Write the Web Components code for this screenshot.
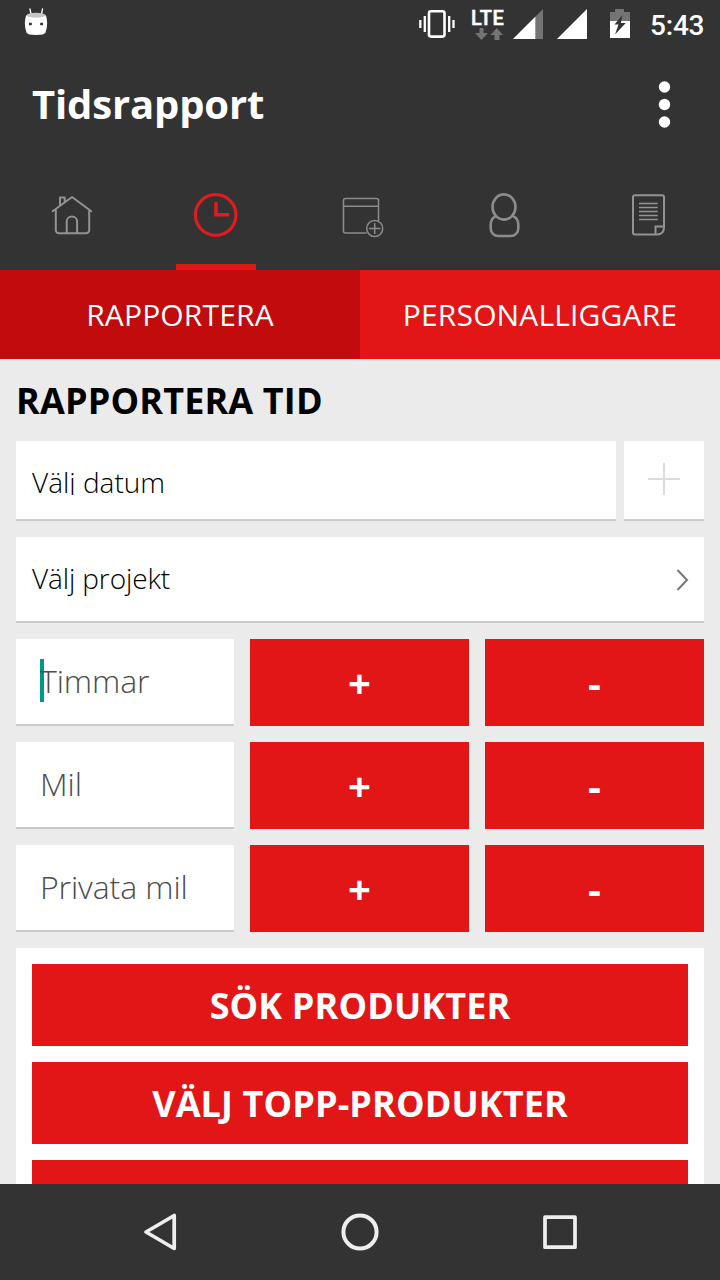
<!DOCTYPE html>
<html lang="sv">
<head>
<meta charset="utf-8">
<meta name="viewport" content="width=device-width, initial-scale=1">
<title>Tidsrapport</title>
<style>
  html, body{margin:0; height:100%; overflow:hidden}
  body{
    --dark:#333;
    --red:#e21517;
    --red-active:#c10b0c;
    --page:#ebebeb;
    --line:#cacaca;
    font-family:"Open Sans", "Noto Sans", sans-serif;
    background:var(--page);
  }
</style>
</head>
<body>
<time-report-app></time-report-app>

<script>
const define = (name, html, setup) => {
  const template = document.createElement('template');
  template.innerHTML = `<style>*, *::before, *::after{box-sizing:border-box} svg{display:block; flex:none}</style>${html}`;
  customElements.define(name, class extends HTMLElement {
    constructor() {
      super();
      this.attachShadow({ mode: 'open' }).appendChild(template.content.cloneNode(true));
    }

    connectedCallback() {
      setup?.(this, this.shadowRoot);
    }
  });
};

const TAB_ICONS = {
  home: `<g stroke="#929292" stroke-width="2" stroke-linecap="round" stroke-linejoin="round">
    <path d="M4.7 20.2 24 6l19.3 14.2M12 14V6.5h4.7v4M7.8 19v20.2a3 3 0 0 0 3 3h27.4a3 3 0 0 0 3-3V19"/>
    <path d="M18.7 42V30.5a5.2 5 0 0 1 10.4 0V42"/></g>`,
  clock: `<g stroke="#de1c22"><circle cx="23.7" cy="24" r="20.3" stroke-width="3.2"/><path d="M24 11v12.7h13" stroke-width="3.6"/></g>`,
  calendar: `<g stroke="#8c8c8c" stroke-width="1.5"><path d="M30.5 42H9.5a2 2 0 0 1-2-2V9.5a2 2 0 0 1 2-2h31a2 2 0 0 1 2 2V30M7.5 15.3h35"/>
    <circle cx="38.7" cy="37.5" r="8"/><path d="M33 37.5h11.4M38.7 32v11"/></g>`,
  person: `<g stroke="#8c8c8c" stroke-width="2.6"><ellipse cx="24" cy="16" rx="11.5" ry="12.6"/>
    <path d="M16 25.3c-3.5 1.2-5.3 4.5-5.3 8.5v3.7a7.5 7.5 0 0 0 7.5 7.5h12.6a7.5 7.5 0 0 0 7.5-7.5v-3.7c0-4-1.8-7.3-5.3-8.5"/></g>`,
  document: `<g stroke="#939393" stroke-width="2"><path d="M33 43.5H11a2 2 0 0 1-2-2V6.2a2 2 0 0 1 2-2h27a2 2 0 0 1 2 2V36c0 4.5-2.5 7.5-7 7.5zM31.5 43v-7.5h8"/>
    <path d="M15 12.5h18.7M15 16.5h18.7M15 20.5h18.7M15 24.5h18.7M15 28.5h18.7" stroke-width="1.3"/></g>`,
};

define('status-bar', `
  <style>
    :host{display:flex; height:48px; padding:0 16px 0 24px; color:#fff; background:var(--dark)}
    .left{flex:1}
    .lte{display:flex; flex-direction:column; width:34px; margin:8px 8px 0 15px; font:500 20px/20px Roboto, sans-serif; -webkit-text-stroke:.5px #fff}
    .lte span{white-space:nowrap; letter-spacing:.5px}
    .lte svg{margin-left:4px}
    .sim{margin-right:14px}
    .battery{margin:0 20px 0 9px}
    .time{width:54px; font:500 28px/51px Roboto, sans-serif; letter-spacing:-.2px; white-space:nowrap}
  </style>
  <div class="left">
    <svg width="24" height="48" viewBox="0 0 24 48">
      <path d="M6 9l1 5M18.5 9l-1 5" stroke="#fff" stroke-width="1.3" stroke-linecap="round"/>
      <path d="M2 15.5Q12 11 22 15.5Q24.5 24 21.5 32.5Q20.5 35 12 35T2.5 32.5Q-.5 24 2 15.5z" fill="#fff"/>
      <ellipse cx="12" cy="15.2" rx="9.3" ry="2.5" fill="#c6c6c6"/>
      <path d="M5 22.7h2.8v2.6H5zM16.2 22.7H19v2.6h-2.8z" fill="#333"/>
    </svg>
  </div>
  <svg width="37" height="48" viewBox="0 0 37 48" fill="none" stroke="#fff">
    <rect x="10" y="11.3" width="15.5" height="25.3" rx="2" stroke-width="2.6"/>
    <path d="M1.3 20v8M34.5 20v8" stroke-width="2.3"/>
    <path d="M5.8 16v16M30.2 16v16" stroke-width="2.3"/>
  </svg>
  <div class="lte"><span>LTE</span>
    <svg width="29" height="12" viewBox="0 0 29 12" fill="#747474"><path d="M4.5 0h4v5H13L6.5 12 0 5h4.5zM19.5 12h5V7H28L21.8 0 15.5 7h4z"/></svg>
  </div>
  <svg class="sim" width="30" height="48" viewBox="0 0 30 48"><path d="M0 39 30 9v30z" fill="#747474"/><path d="M0 39 22.3 16.7V39z" fill="#fff"/></svg>
  <svg class="sim" width="30" height="48" viewBox="0 0 30 48"><path d="M0 39 30 9v30z" fill="#fff"/></svg>
  <svg class="battery" width="20" height="48" viewBox="0 0 20 48">
    <path d="M5 9h9v3h6v10H0V12h5z" fill="#747474"/><path d="M0 21h20v17H0z" fill="#fff"/>
    <path d="M12.5 15 4.5 24.5h4L5 34.5 15.8 23h-5z" fill="#333"/>
  </svg>
  <div class="time">5:43</div>
`);

define('app-toolbar', `
  <style>
    :host{display:flex; align-items:center; justify-content:space-between; height:112px; padding:0 48px 0 32px; color:#fff; background:var(--dark)}
    h1{margin:0 0 1px; font-size:40px; line-height:56px; font-weight:700; letter-spacing:-.15px}
  </style>
  <h1><slot></slot></h1>
  <svg width="15" height="52" viewBox="0 0 15 52" fill="#fff" role="img" aria-label="Meny">
    <circle cx="7.5" cy="9" r="5.7"/><circle cx="7.5" cy="26.5" r="5.7"/><circle cx="7.5" cy="44" r="5.7"/>
  </svg>
`);

define('nav-tab', `
  <style>
    :host{display:flex; flex-direction:column; align-items:center; justify-content:space-between; flex:1; padding-top:31px}
    .bar{width:80px; height:6px}
    :host([active]) .bar{background:var(--red)}
  </style>
  <svg width="48" height="48" viewBox="0 0 48 48" fill="none"></svg>
  <div class="bar"></div>
`, (el, root) => {
  root.querySelector('svg').innerHTML = TAB_ICONS[el.getAttribute('icon')];
});

define('segment-button', `
  <style>
    :host{display:block; flex:1; text-align:center; font-size:30px; line-height:89px; letter-spacing:.15px; color:#fff; background:var(--red)}
    :host([active]){background:var(--red-active)}
  </style>
  <slot></slot>
`);

define('select-field', `
  <style>
    :host{display:flex; align-items:center; justify-content:space-between; height:86px; padding:0 15px 0 16px; font-size:28px; font-weight:300; color:#000; background:#fff; border-bottom:2px solid var(--line)}
    span{margin-bottom:2px; line-height:38px; letter-spacing:-.12px; white-space:nowrap}
    /* the date label is cut just below its baseline */
    :host([compact]){flex:1; height:80px; align-items:flex-start; padding-top:22px}
    :host([compact]) span{height:32px; overflow:hidden; letter-spacing:0}
    :host([compact]) svg{display:none}
  </style>
  <span><slot></slot></span>
  <svg width="13" height="24" viewBox="0 0 13 24" fill="none" stroke="#777" stroke-width="2"><path d="M1.5 3l9.5 10-9.5 10"/></svg>
`);

define('add-button', `
  <style>
    :host{display:flex; justify-content:center; width:80px; height:80px; padding-top:22px; background:#fff; border-bottom:2px solid var(--line)}
  </style>
  <svg width="32" height="32" viewBox="0 0 32 32" stroke="#dcdcdc" stroke-width="2"><path d="M0 16h32M16 0v32"/></svg>
`);

define('stepper-row', `
  <style>
    :host{display:grid; grid-template-columns:218px 1fr 1fr; gap:16px; height:87px}
    .field{position:relative; padding-left:24px; font-size:32px; line-height:84px; font-weight:300; letter-spacing:-.1px; color:#4c4c4c; background:#fff; border-bottom:2px solid var(--line)}
    .field span{position:relative; white-space:nowrap}
    :host([focused]) .field::before{content:""; position:absolute; left:24px; top:20px; width:4px; height:43px; background:#009688}
    .step{text-align:center; font-size:40px; line-height:87px; font-weight:700; color:#fff; background:var(--red)}
  </style>
  <div class="field"><span><slot></slot></span></div>
  <div class="step">+</div>
  <div class="step">-</div>
`);

define('action-button', `
  <style>
    :host{display:block; flex:none; height:82px; text-align:center; font-size:36px; line-height:84px; letter-spacing:.1px; font-weight:700; color:#fff; background:var(--red)}
  </style>
  <slot></slot>
`);

define('system-nav', `
  <style>
    :host{display:flex; align-items:center; justify-content:space-between; height:96px; padding:0 140px; background:var(--dark)}
  </style>
  <svg width="40" height="40" viewBox="0 0 40 40" fill="none" stroke="#eee" stroke-width="3.7" stroke-linejoin="round"><path d="M6 20 34.2 3.5v33z"/></svg>
  <svg width="40" height="40" viewBox="0 0 40 40" fill="none" stroke="#eee" stroke-width="4"><circle cx="20" cy="20" r="16.6"/></svg>
  <svg width="40" height="40" viewBox="0 0 40 40" fill="none" stroke="#eee" stroke-width="3.7" stroke-linejoin="round"><path d="M5 5.2h30v30H5z"/></svg>
`);

define('time-report-app', `
  <style>
    :host{display:flex; flex-direction:column; width:720px; height:1280px; overflow:hidden; background:var(--page)}
    nav{display:flex; height:110px; background:var(--dark)}
    .segments{display:flex; height:89px}
    status-bar, app-toolbar, nav, .segments, system-nav{flex:none}
    main{flex:1; min-height:0; overflow:hidden; display:flex; flex-direction:column; gap:16px; padding:0 16px}
    main > *{flex:none}
    h2{margin:0 0 -16px; height:82px; font-size:36px; line-height:84px; letter-spacing:.15px; font-weight:700; color:#000}
    .row{display:flex; gap:8px}
    .card{display:flex; flex-direction:column; gap:16px; padding:16px; background:#fff}
  </style>
  <status-bar></status-bar>
  <app-toolbar>Tidsrapport</app-toolbar>
  <nav>
    <nav-tab icon="home"></nav-tab>
    <nav-tab icon="clock" active></nav-tab>
    <nav-tab icon="calendar"></nav-tab>
    <nav-tab icon="person"></nav-tab>
    <nav-tab icon="document"></nav-tab>
  </nav>
  <div class="segments">
    <segment-button active>RAPPORTERA</segment-button>
    <segment-button>PERSONALLIGGARE</segment-button>
  </div>
  <main>
    <h2>RAPPORTERA TID</h2>
    <div class="row">
      <select-field compact>Välj datum</select-field>
      <add-button></add-button>
    </div>
    <select-field>Välj projekt</select-field>
    <stepper-row focused>Timmar</stepper-row>
    <stepper-row>Mil</stepper-row>
    <stepper-row>Privata mil</stepper-row>
    <div class="card">
      <action-button>SÖK PRODUKTER</action-button>
      <action-button>VÄLJ TOPP-PRODUKTER</action-button>
      <action-button></action-button>
    </div>
  </main>
  <system-nav></system-nav>
`);
</script>
</body>
</html>
